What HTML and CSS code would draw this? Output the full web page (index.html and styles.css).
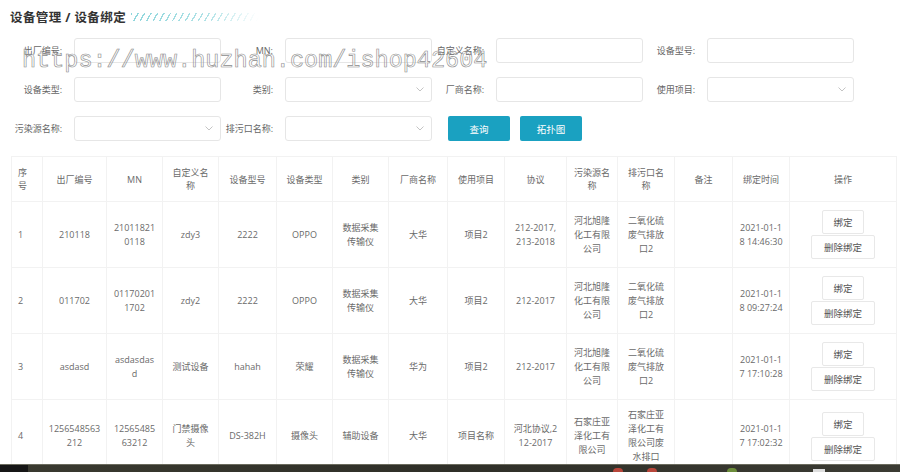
FILE: index.html
```html
<!DOCTYPE html>
<html lang="zh-CN">
<head>
<meta charset="utf-8">
<title>设备绑定</title>
<link rel="stylesheet" href="styles.css">
</head>
<body>
<div class="screen">
  <div class="page">
    <h1 class="title"><span>设备管理 / 设备绑定</span><i class="stripes"></i></h1>

    <div class="filters">
      <div class="field"><label>出厂编号:</label><div class="input"></div></div>
      <div class="field"><label>MN:</label><div class="input"></div></div>
      <div class="field"><label>自定义名称:</label><div class="input"></div></div>
      <div class="field"><label>设备型号:</label><div class="input"></div></div>

      <div class="field"><label>设备类型:</label><div class="input"></div></div>
      <div class="field"><label>类别:</label><div class="input select"><svg width="8" height="5" viewBox="0 0 8 5"><path d="M0.5 0.5 L4 4 L7.5 0.5" fill="none" stroke="#c4c4c4"/></svg></div></div>
      <div class="field"><label>厂商名称:</label><div class="input"></div></div>
      <div class="field"><label>使用项目:</label><div class="input select"><svg width="8" height="5" viewBox="0 0 8 5"><path d="M0.5 0.5 L4 4 L7.5 0.5" fill="none" stroke="#c4c4c4"/></svg></div></div>

      <div class="field"><label>污染源名称:</label><div class="input select"><svg width="8" height="5" viewBox="0 0 8 5"><path d="M0.5 0.5 L4 4 L7.5 0.5" fill="none" stroke="#c4c4c4"/></svg></div></div>
      <div class="field"><label>排污口名称:</label><div class="input select"><svg width="8" height="5" viewBox="0 0 8 5"><path d="M0.5 0.5 L4 4 L7.5 0.5" fill="none" stroke="#c4c4c4"/></svg></div></div>
      <div class="actions"><button class="btn">查询</button><button class="btn">拓扑图</button></div>
    </div>

    <table class="grid">
      <colgroup>
        <col style="width:31px"><col style="width:64px"><col style="width:56px"><col style="width:56px"><col style="width:58px"><col style="width:56px"><col style="width:56px"><col style="width:59px"><col style="width:57px"><col style="width:62px"><col style="width:51px"><col style="width:57px"><col style="width:58px"><col style="width:57px"><col style="width:107px">
      </colgroup>
      <thead>
        <tr>
          <th class="idx">序<br>号</th><th>出厂编号</th><th>MN</th><th>自定义名<br>称</th><th>设备型号</th><th>设备类型</th><th>类别</th><th>厂商名称</th><th>使用项目</th><th>协议</th><th>污染源名<br>称</th><th>排污口名<br>称</th><th>备注</th><th>绑定时间</th><th>操作</th>
        </tr>
      </thead>
      <tbody>
        <tr>
          <td class="idx">1</td><td>210118</td><td>21011821<br>0118</td><td>zdy3</td><td>2222</td><td>OPPO</td><td>数据采集<br>传输仪</td><td>大华</td><td>项目2</td><td>212-2017,<br>213-2018</td><td>河北旭隆<br>化工有限<br>公司</td><td>二氧化硫<br>废气排放<br>口2</td><td></td><td>2021-01-1<br>8 14:46:30</td>
          <td><div class="ops"><button class="op">绑定</button><button class="op">删除绑定</button></div></td>
        </tr>
        <tr>
          <td class="idx">2</td><td>011702</td><td>01170201<br>1702</td><td>zdy2</td><td>2222</td><td>OPPO</td><td>数据采集<br>传输仪</td><td>大华</td><td>项目2</td><td>212-2017</td><td>河北旭隆<br>化工有限<br>公司</td><td>二氧化硫<br>废气排放<br>口2</td><td></td><td>2021-01-1<br>8 09:27:24</td>
          <td><div class="ops"><button class="op">绑定</button><button class="op">删除绑定</button></div></td>
        </tr>
        <tr>
          <td class="idx">3</td><td>asdasd</td><td>asdasdas<br>d</td><td>测试设备</td><td>hahah</td><td>荣耀</td><td>数据采集<br>传输仪</td><td>华为</td><td>项目2</td><td>212-2017</td><td>河北旭隆<br>化工有限<br>公司</td><td>二氧化硫<br>废气排放<br>口2</td><td></td><td>2021-01-1<br>7 17:10:28</td>
          <td><div class="ops"><button class="op">绑定</button><button class="op">删除绑定</button></div></td>
        </tr>
        <tr>
          <td class="idx">4</td><td>1256548563<br>212</td><td>12565485<br>63212</td><td>门禁摄像<br>头</td><td>DS-382H</td><td>摄像头</td><td>辅助设备</td><td>大华</td><td>项目名称</td><td>河北协议,2<br>12-2017</td><td>石家庄亚<br>泽化工有<br>限公司</td><td>石家庄亚<br>泽化工有<br>限公司废<br>水排口</td><td></td><td>2021-01-1<br>7 17:02:32</td>
          <td><div class="ops"><button class="op">绑定</button><button class="op">删除绑定</button></div></td>
        </tr>
      </tbody>
    </table>
  </div>
  <div class="watermark">https://www.huzhan.com/ishop42604</div>
</div>
<div class="taskbar">
  <span class="tb-start"></span>
  <span class="tb-dot tb-red" style="margin-left:585px"></span>
  <span class="tb-dot tb-red" style="margin-left:24px"></span>
  <span class="tb-dot tb-green" style="margin-left:70px"></span>
  <span class="tb-sq" style="margin-left:76px"></span>
</div>
</body>
</html>
```

FILE: styles.css
```css
* { box-sizing: border-box; }

html, body {
  margin: 0;
  padding: 0;
  width: 900px;
  height: 472px;
  overflow: hidden;
  background: #fff;
  font-family: "Open Sans", "Noto Sans CJK SC", sans-serif;
  color: #666;
}

.screen {
  position: relative;
  height: 464px;
  overflow: hidden;
}

.page {
  padding: 8px 0 0 10px;
}

.title {
  margin: 0;
  display: flex;
  align-items: center;
  height: 17px;
  font-size: 12.5px;
  font-weight: bold;
  color: #333;
  letter-spacing: 0.4px;
}

.stripes {
  display: block;
  width: 128px;
  height: 8px;
  margin-left: 5px;
  background: repeating-linear-gradient(120deg, #8fd6dc 0 1.3px, transparent 1.3px 5.6px);
  -webkit-mask-image: linear-gradient(to right, #000 0%, rgba(0,0,0,0.7) 60%, transparent 100%);
  mask-image: linear-gradient(to right, #000 0%, rgba(0,0,0,0.7) 60%, transparent 100%);
}

.filters {
  margin-top: 13px;
  display: grid;
  grid-template-columns: repeat(4, 211px);
  grid-auto-rows: 25px;
  row-gap: 14px;
}

.field {
  display: flex;
  align-items: center;
}

.field label {
  width: 52px;
  margin-right: 12px;
  text-align: right;
  font-size: 9px;
  color: #666;
  white-space: nowrap;
}

.input {
  width: 147px;
  height: 25px;
  border: 1px solid #e6e6e6;
  border-radius: 3px;
  background: #fff;
}

.select {
  display: flex;
  align-items: center;
  justify-content: flex-end;
  padding-right: 7px;
}

.actions {
  display: flex;
  gap: 10px;
  padding-left: 16px;
}

.btn {
  width: 62px;
  height: 25px;
  border: none;
  border-radius: 2px;
  background: #1aa1c1;
  color: #fff;
  font-family: "Noto Sans CJK SC", sans-serif;
  font-size: 9.5px;
  padding: 0;
}

.grid {
  margin: 15px 0 0 1px;
  border-collapse: collapse;
  table-layout: fixed;
  width: 886px;
  font-size: 9px;
  color: #6a6a6a;
  border: 1px solid #ebebeb;
}

.grid th,
.grid td {
  border: 1px solid #f2f2f2;
  text-align: center;
  vertical-align: middle;
  white-space: nowrap;
  line-height: 14px;
  padding: 8px 4px;
}

.grid th {
  font-weight: normal;
  padding: 9px 4px;
  line-height: 13px;
}

.grid .idx {
  text-align: left;
  padding-left: 6px;
}

.ops {
  display: flex;
  flex-direction: column;
  align-items: center;
  gap: 1px;
}

.op {
  height: 24px;
  padding: 0 10px;
  background: #fff;
  border: 1px solid #e8e8e8;
  border-radius: 2px;
  font-family: "Noto Sans CJK SC", sans-serif;
  font-size: 9.5px;
  color: #555;
}

.op + .op {
  padding: 0 12px;
}

.watermark {
  position: absolute;
  left: 22px;
  top: 49px;
  font-family: "Liberation Mono", monospace;
  font-size: 23.5px;
  line-height: 24px;
  color: rgba(255, 255, 255, 0.2);
  -webkit-text-stroke: 0.6px #8c8c8c;
  white-space: nowrap;
  pointer-events: none;
}

.taskbar {
  height: 8px;
  display: flex;
  align-items: flex-start;
  background: linear-gradient(to right, #3a3a30, #2f2f28 50%, #3b3b33);
  border-top: 1px solid #6b6b5e;
}

.tb-start {
  width: 28px;
  height: 7px;
  background: #161616;
}

.tb-dot {
  width: 10px;
  height: 4px;
  margin-top: 3px;
  border-radius: 5px 5px 0 0;
}

.tb-red { background: #b8463a; }
.tb-green { background: #6c8d3a; }

.tb-sq {
  width: 12px;
  height: 3px;
  margin-top: 4px;
  background: #ddd;
}
```
